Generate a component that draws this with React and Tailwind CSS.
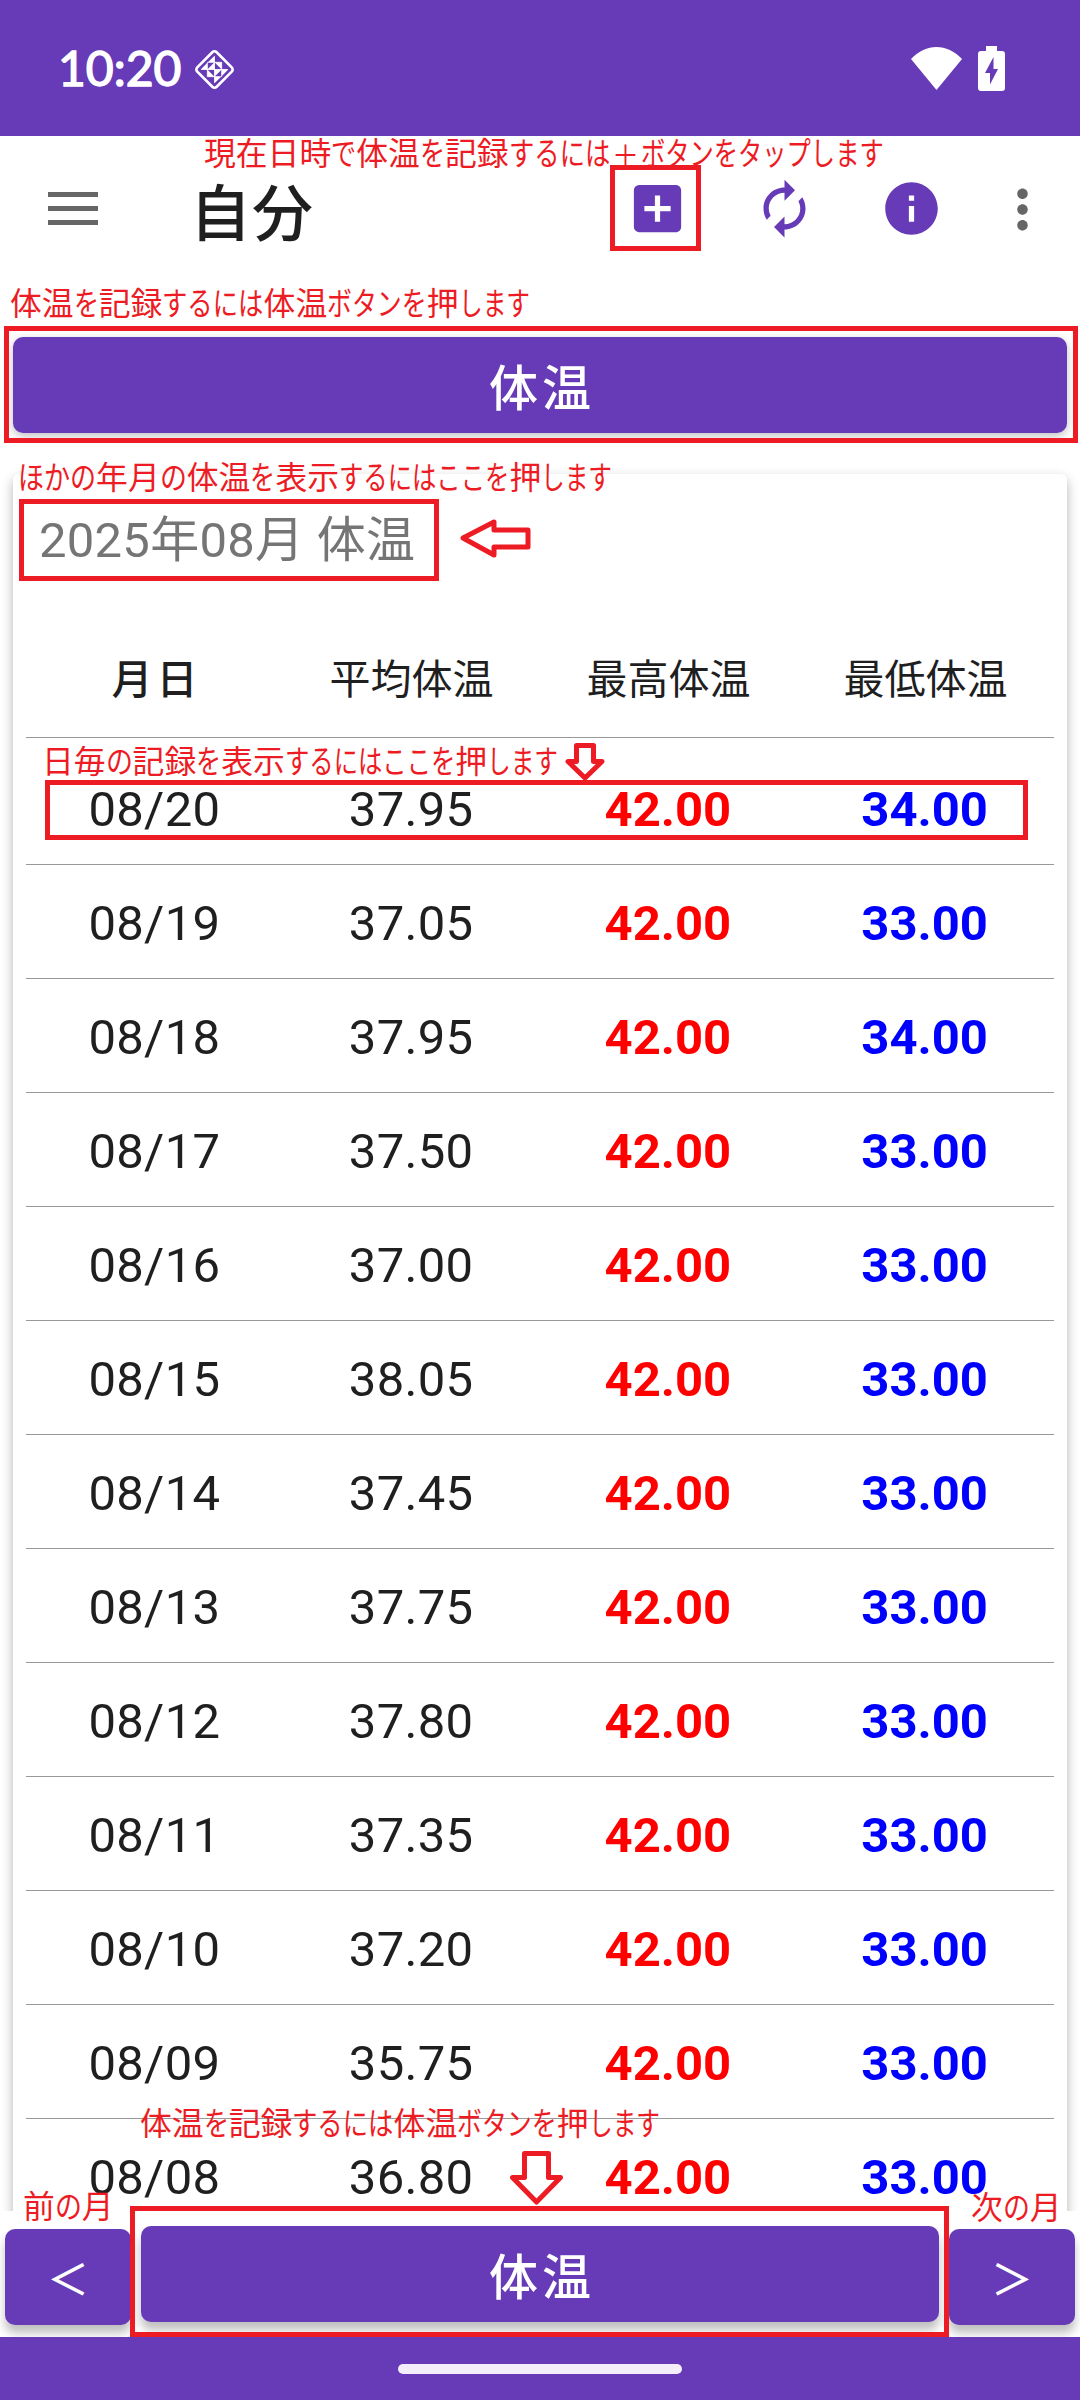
import { MdAddBox, MdAutorenew, MdInfo, MdMoreVert } from 'react-icons/md'

const records = [
  { date: '08/20', avg: '37.95', max: '42.00', min: '34.00' },
  { date: '08/19', avg: '37.05', max: '42.00', min: '33.00' },
  { date: '08/18', avg: '37.95', max: '42.00', min: '34.00' },
  { date: '08/17', avg: '37.50', max: '42.00', min: '33.00' },
  { date: '08/16', avg: '37.00', max: '42.00', min: '33.00' },
  { date: '08/15', avg: '38.05', max: '42.00', min: '33.00' },
  { date: '08/14', avg: '37.45', max: '42.00', min: '33.00' },
  { date: '08/13', avg: '37.75', max: '42.00', min: '33.00' },
  { date: '08/12', avg: '37.80', max: '42.00', min: '33.00' },
  { date: '08/11', avg: '37.35', max: '42.00', min: '33.00' },
  { date: '08/10', avg: '37.20', max: '42.00', min: '33.00' },
  { date: '08/09', avg: '35.75', max: '42.00', min: '33.00' },
  { date: '08/08', avg: '36.80', max: '42.00', min: '33.00' },
]

// kana are set narrower than kanji in the notes
const kanaWidth = { 'し': 21, 'こ': 22, 'ン': 22.5, 'ッ': 21, 'ま': 24, 'す': 26, 'ボ': 26, 'タ': 26, 'か': 26, 'の': 27 }

const Note = ({ text, className }) => {
  const runs = text.split(/([ぁ-ヶ]+|＋)/).filter(Boolean)
  return (
    <div className={`absolute whitespace-nowrap text-[31.8px] leading-[32px] text-[#ed1c24] ${className}`}>
      {runs.map((run, index) => {
        if (run === '＋') return <span key={index} className="inline-block w-[31px] text-center text-[27px]">{run}</span>
        if (!/[ぁ-ヶ]/.test(run)) return <span key={index}>{run}</span>
        const width = [...run].reduce((sum, c) => sum + (kanaWidth[c] || 25.1), 0)
        return (
          <span
            key={index}
            className="inline-block origin-left"
            style={{ width, transform: `scaleX(${width / (run.length * 31.8)})` }}
          >
            {run}
          </span>
        )
      })}
    </div>
  )
}

const Frame = ({ className }) => (
  <div className={`absolute border-[5px] border-[#ed1c24] ${className}`} />
)

const StatusBar = () => (
  <div className="h-[136px] shrink-0 bg-[#673ab7] flex items-center pl-[58px] pr-[75px] text-white">
    <span className="font-['Lato'] text-[48px] leading-none w-[135px] -mt-px [-webkit-text-stroke:1.4px_white]">10:20</span>
    <svg className="w-[43px] h-[43px] mt-[3px]" viewBox="0 0 42 42" fill="none">
      <rect x="7.6" y="7.6" width="26.8" height="26.8" rx="3" transform="rotate(45 21 21)" stroke="currentColor" strokeWidth="2.6" />
      <path
        d="M21 7.500V14h-6.500zM7.500 21L14 14.500V21zM34.500 21L28 27.500V21zM21 34.500V28h6.500zM21 14v7h-7zM21 14h7v7zM21 21h7l-7 7zM14 21v7h7z"
        fill="currentColor"
      />
      <path d="M14 14h14v14H14zM21 8v26M8 21h26" stroke="currentColor" strokeWidth="0.8" />
    </svg>
    <svg className="w-[51px] h-[43px] ml-auto" viewBox="0 0 51 43" fill="currentColor">
      <path d="M0 12C15-4 36-4 51 12L25.500 43z" />
    </svg>
    <svg className="w-[27px] h-[45px] ml-4" viewBox="0 0 27 45">
      <path d="M8 0h11v5h5q3 0 3 3v34q0 3-3 3H3q-3 0-3-3V8q0-3 3-3h5z" fill="currentColor" />
      <path d="M15.500 11v12h4.500L12 38.500V27H7z" fill="#673ab7" />
    </svg>
  </div>
)

const Header = () => (
  <div className="h-[145px] shrink-0 flex items-center pl-[48px]">
    <div className="w-[50px] flex flex-col gap-[9px]">
      <div className="h-[5px] bg-[#666]" />
      <div className="h-[5px] bg-[#666]" />
      <div className="h-[5px] bg-[#666]" />
    </div>
    <h1 className="ml-[92px] w-[436px] pt-[12px] text-[61px] leading-[72px] tracking-[1px] font-medium text-[#1f1f1f]">自分</h1>
    <MdAddBox className="w-[63px] h-[63px] text-[#673ab7]" />
    <MdAutorenew className="w-[63px] h-[63px] ml-16 text-[#673ab7]" />
    <MdInfo className="w-[63px] h-[63px] ml-16 text-[#673ab7]" />
    <MdMoreVert className="w-[63px] h-[63px] ml-12 mt-[2px] text-[#666]" />
  </div>
)

const App = () => {
  return (
    <div className="relative w-[1080px] h-[2400px] overflow-hidden flex flex-col bg-white text-[#1f1f1f] font-['Roboto','Noto_Sans_CJK_JP',sans-serif]">
      <StatusBar />
      <Header />

      <div className="flex-1 min-h-0 overflow-hidden px-[13px] pt-[56px]">
        <button className="block w-full h-[96px] rounded-[10px] bg-[#673ab7] text-white pt-[10px] pl-[4px] text-[49px] tracking-[4px] font-medium shadow-[0_3px_10px_rgba(0,0,0,0.25)]">
          体温
        </button>

        <div className="mt-[41px] h-[1800px] rounded-[6px] bg-white px-[13px] shadow-[0_5px_12px_rgba(0,0,0,0.3)]">
          <div className="h-[132px] pl-[13px] pt-[32px] text-[49px] leading-[70px] tracking-[0.25px] text-[#757575]">2025年08月 体温</div>
          <div className="h-[132px] pt-[19px] grid grid-cols-4 items-center text-center text-[41px] border-b border-[#999]">
            <div className="text-[41px] tracking-[4px] pl-[4px] font-medium">月日</div>
            <div>平均体温</div>
            <div>最高体温</div>
            <div>最低体温</div>
          </div>
          <div className="pt-[13px]">
            {records.map((record) => (
              <div
                key={record.date}
                className="h-[114px] pt-[4px] pr-[1px] grid grid-cols-4 items-center text-center text-[49px] border-b border-[#999]"
              >
                <div className="tracking-[0.3px]">{record.date}</div>
                <div className="tracking-[0.3px]">{record.avg}</div>
                <div className="font-bold text-[#ff0000]">{record.max}</div>
                <div className="font-bold text-[#0000ff]">{record.min}</div>
              </div>
            ))}
          </div>
        </div>
      </div>

      <div className="h-[126px] shrink-0 flex bg-white pl-[5px] pr-[5px] pt-[15px] gap-[10px] text-white">
        <button className="mt-[3px] w-[126px] h-[96px] pt-[6px] rounded-[10px] bg-[#673ab7] text-[42px] font-medium shadow-[0_8px_10px_rgba(0,0,0,0.25)]">＜</button>
        <button className="flex-1 h-[96px] pt-[10px] pl-[4px] rounded-[10px] bg-[#673ab7] text-[49px] tracking-[4px] font-medium shadow-[0_8px_10px_rgba(0,0,0,0.25)]">体温</button>
        <button className="mt-[3px] w-[126px] h-[96px] pt-[6px] rounded-[10px] bg-[#673ab7] text-[42px] font-medium shadow-[0_8px_10px_rgba(0,0,0,0.25)]">＞</button>
      </div>
      <div className="relative z-10 h-[63px] shrink-0 bg-[#673ab7] flex justify-center pt-[27px]">
        <div className="w-[284px] h-[10px] rounded-full bg-[#f3eefa]" />
      </div>

      {/* help notes over the screen */}
      <Note text="現在日時で体温を記録するには＋ボタンをタップします" className="left-[204px] top-[138px]" />
      <Frame className="left-[610px] top-[165px] w-[91px] h-[86px]" />

      <Note text="体温を記録するには体温ボタンを押します" className="left-[10px] top-[288px]" />
      <Frame className="left-[4px] top-[326px] w-[1074px] h-[117px]" />

      <Note text="ほかの年月の体温を表示するにはここを押します" className="left-[18px] top-[462px]" />
      <Frame className="left-[19px] top-[499px] w-[420px] h-[82px]" />
      <svg className="absolute left-[460px] top-[518px] w-[72px] h-[40px]" viewBox="0 0 72 40" fill="none" stroke="#ed1c24" strokeWidth="5" strokeLinejoin="round">
        <path d="M3 20L34 4v8h34v17H34v8z" />
      </svg>

      <Note text="日毎の記録を表示するにはここを押します" className="left-[42px] top-[746px]" />
      <Frame className="left-[45px] top-[780px] w-[983px] h-[60px]" />
      <svg className="absolute left-[565px] top-[743px] w-[40px] h-[39px]" viewBox="0 0 40 39" fill="none" stroke="#ed1c24" strokeWidth="5" strokeLinejoin="round">
        <path d="M11.500 2.500h17v16H37L20 35 3 18.500h8.500z" />
      </svg>

      <Note text="体温を記録するには体温ボタンを押します" className="left-[140px] top-[2108px]" />
      <svg className="absolute left-[510px] top-[2151px] w-[54px] h-[54px]" viewBox="0 0 54 54" fill="none" stroke="#ed1c24" strokeWidth="5" strokeLinejoin="round">
        <path d="M14.500 2.500h24v24H50.500L26.500 51 2.500 26.500h12z" />
      </svg>
      <Frame className="left-[130px] top-[2206px] w-[819px] h-[131px] z-20" />
      <Note text="前の月" className="left-[23px] top-[2191px]" />
      <Note text="次の月" className="left-[971px] top-[2192px]" />
    </div>
  )
}

export default App
